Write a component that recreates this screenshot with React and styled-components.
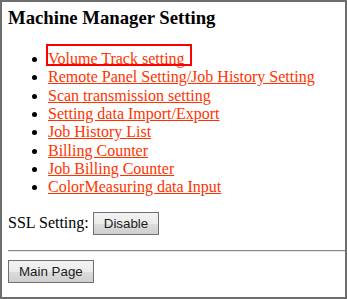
import React from 'react'
import styled, {createGlobalStyle} from 'styled-components'

const GlobalStyle = createGlobalStyle`
  html, body {
    margin: 0;
    padding: 0;
    background: #fff;
  }
  body {
    font-family: "Liberation Serif", "Times New Roman", serif;
    font-size: 16px;
    color: #000;
  }
`

const Frame = styled.div`
  box-sizing: border-box;
  width: 347px;
  height: 299px;
  border: 2px solid #6d6d6d;
  padding: 5px 0 0 6px;
  overflow: hidden;
`

const Title = styled.h3`
  font-size: 18.72px;
  font-weight: bold;
  margin: 0 0 21px;
`

const MenuList = styled.ul`
  margin: 0 0 15px;
  padding-left: 40px;
  list-style: disc;

  li {
    line-height: 18.33px;
  }
`

const MenuLink = styled.a`
  color: #ff3300;
  text-decoration: underline;
  position: relative;

  ${props => props.$selected && `
    &::after {
      content: '';
      position: absolute;
      top: -6px;
      bottom: 1px;
      left: -2px;
      right: -7px;
      border: 2px solid #ff0000;
      pointer-events: none;
    }
  `}
`

const SslRow = styled.p`
  margin: 0 0 15px;
  display: flex;
  align-items: center;
  gap: 4px;
`

const Button = styled.button`
  box-sizing: border-box;
  font-family: "Liberation Sans", Arial, sans-serif;
  font-size: 13.33px;
  color: #1c1c1c;
  height: 23px;
  padding: 0 10px;
  border: 1px solid #707070;
  border-radius: 0;
  background: linear-gradient(to bottom, #f2f2f2 0%, #ebebeb 50%, #dddddd 51%, #cfcfcf 100%);
  cursor: pointer;
`

const Divider = styled.hr`
  margin: 0 0 8px;
  border: none;
  border-top: 1px solid #8a8a8a;
  border-bottom: 1px solid #e6e6e6;
  height: 0;
`

const items = [
  'Volume Track setting',
  'Remote Panel Setting/Job History Setting',
  'Scan transmission setting',
  'Setting data Import/Export',
  'Job History List',
  'Billing Counter',
  'Job Billing Counter',
  'ColorMeasuring data Input',
]

function App() {
  return (
    <>
      <GlobalStyle />
      <Frame>
        <Title>Machine Manager Setting</Title>
        <MenuList>
          {items.map((label, i) => (
            <li key={i}>
              <MenuLink href="#" $selected={i === 0}>{label}</MenuLink>
            </li>
          ))}
        </MenuList>
        <SslRow>
          SSL Setting: <Button>Disable</Button>
        </SslRow>
        <Divider />
        <Button>Main Page</Button>
      </Frame>
    </>
  )
}

export default App
